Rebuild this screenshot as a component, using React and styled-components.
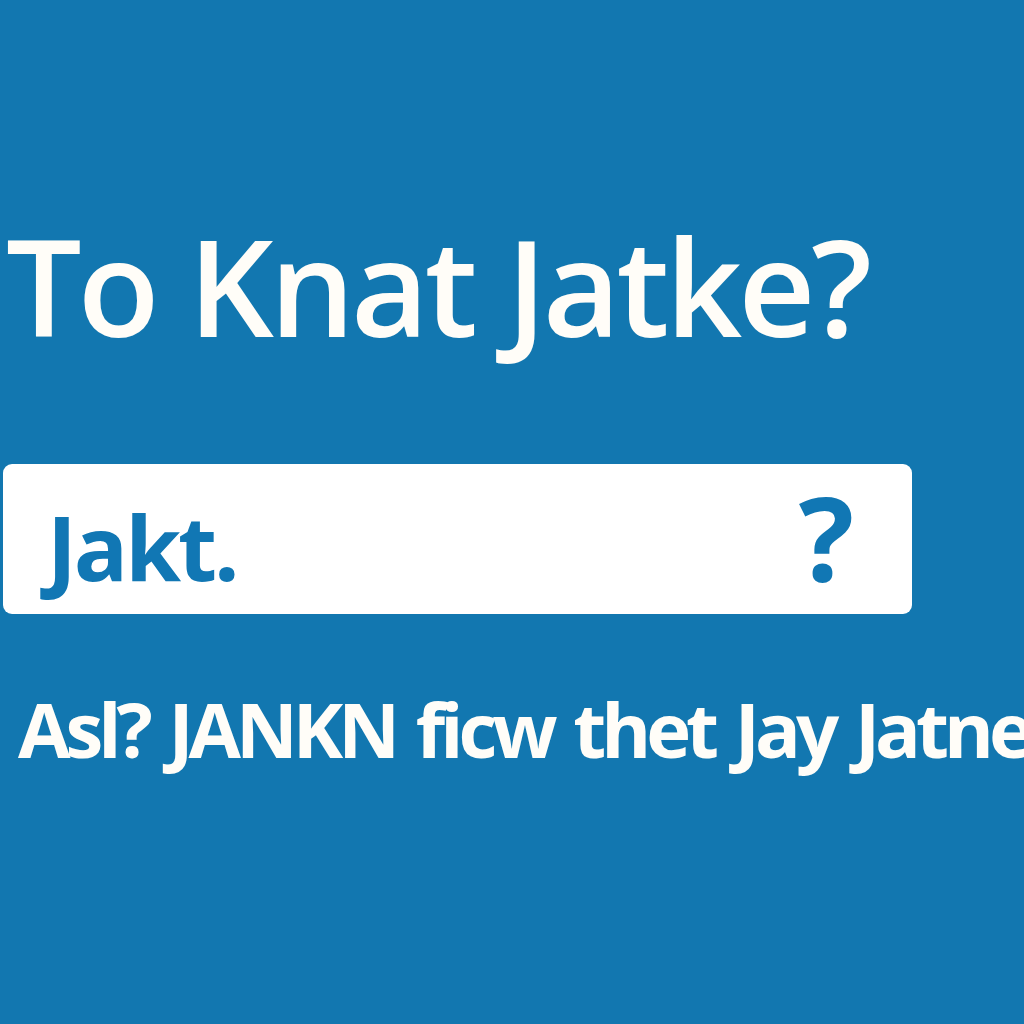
import React from "react";
import styled, { createGlobalStyle } from "styled-components";

const Global = createGlobalStyle`
  html, body { margin: 0; padding: 0; background: #1277b0; }
  #root { min-height: 1024px; }
`;

const Page = styled.main`
  width: 1024px;
  height: 1024px;
  overflow: hidden;
  background: #1277b0;
  display: flex;
  flex-direction: column;
  font-family: "Open Sans", "Liberation Sans", sans-serif;
  color: #fffdf8;
`;

const Title = styled.h1`
  margin: 218px 0 0 6px;
  font-size: 134px;
  font-weight: 600;
  line-height: 1;
  letter-spacing: -4px;
  word-spacing: 2px;
  white-space: nowrap;
`;

const SearchBox = styled.div`
  margin: 112px 0 0 3px;
  width: 909px;
  height: 150px;
  box-sizing: border-box;
  background: #ffffff;
  border-radius: 9px;
  display: flex;
  align-items: center;
  justify-content: space-between;
  padding: 14px 58px 0 44px;
`;

const Query = styled.span`
  font-size: 90px;
  font-weight: 700;
  color: #1177b4;
  letter-spacing: -3px;
  line-height: 1;
`;

const Help = styled.span`
  font-size: 116px;
  font-weight: 700;
  color: #1177b4;
  line-height: 1;
  margin-top: -20px;
`;

const Caption = styled.p`
  margin: 77px 0 0 18px;
  font-size: 76px;
  font-weight: 700;
  line-height: 1;
  white-space: nowrap;
  letter-spacing: -5px;
  word-spacing: 6px;
`;

export default function App() {
  return (
    <>
      <Global />
      <Page>
        <Title>To Knat Jatke?</Title>
        <SearchBox>
          <Query>Jakt.</Query>
          <Help>?</Help>
        </SearchBox>
        <Caption>Asl? JANKN ficw thet Jay Jatne</Caption>
      </Page>
    </>
  );
}
